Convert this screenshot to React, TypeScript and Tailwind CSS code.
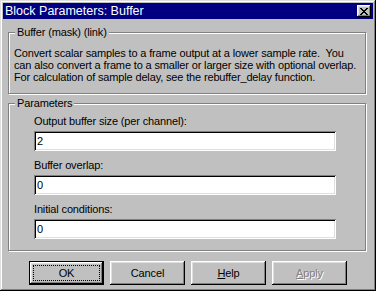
import React from "react";

const raised =
  "shadow-[inset_-1px_-1px_0_#000,inset_1px_1px_0_#fff,inset_-2px_-2px_0_#808080,inset_2px_2px_0_#dfdfdf]";
const sunken =
  "shadow-[inset_1px_1px_0_#808080,inset_-1px_-1px_0_#fff,inset_2px_2px_0_#000,inset_-2px_-2px_0_#dfdfdf]";
const etched = "border border-[#808080] shadow-[inset_1px_1px_0_#fff,1px_1px_0_#fff]";

function CloseGlyph() {
  // 8x7 pixel cross, drawn as little squares
  const pts: [number, number][] = [
    [0, 0], [1, 0], [6, 0], [7, 0],
    [1, 1], [2, 1], [5, 1], [6, 1],
    [2, 2], [3, 2], [4, 2], [5, 2],
    [3, 3], [4, 3],
    [2, 4], [3, 4], [4, 4], [5, 4],
    [1, 5], [2, 5], [5, 5], [6, 5],
    [0, 6], [1, 6], [6, 6], [7, 6],
  ];
  return (
    <svg width="8" height="7" viewBox="0 0 8 7" shapeRendering="crispEdges">
      {pts.map(([x, y]) => (
        <rect key={`${x}-${y}`} x={x} y={y} width="1" height="1" fill="#000" />
      ))}
    </svg>
  );
}

function GroupBox({
  title,
  className,
  children,
}: {
  title: string;
  className: string;
  children: React.ReactNode;
}) {
  return (
    <div className={`relative ${etched} ${className}`}>
      <span className="absolute left-[6px] top-[-8px] bg-[#c0c0c0] px-[2px] leading-[14px]">
        {title}
      </span>
      {children}
    </div>
  );
}

function Field({ label, value, first }: { label: string; value: string; first?: boolean }) {
  return (
    <div className={first ? "" : "mt-[7px]"}>
      <div className="leading-[14px]">{label}</div>
      <div className={`mt-[3px] h-[20px] w-[302px] bg-white ${sunken} flex items-center pl-[3px]`}>
        {value}
      </div>
    </div>
  );
}

function Button({
  children,
  isDefault,
  disabled,
}: {
  children: React.ReactNode;
  isDefault?: boolean;
  disabled?: boolean;
}) {
  if (isDefault) {
    return (
      <div className="w-[75px] h-[24px] border border-black">
        <div className={`w-full h-full ${raised} p-[3px]`}>
          <div className="w-full h-full border border-dotted border-black flex items-center justify-center">
            {children}
          </div>
        </div>
      </div>
    );
  }
  return (
    <div
      className={`w-[75px] h-[24px] ${raised} flex items-center justify-center ${
        disabled ? "text-[#808080] [text-shadow:1px_1px_0_#fff]" : ""
      }`}
    >
      {children}
    </div>
  );
}

export default function App() {
  return (
    <div
      className="w-[376px] h-[291px] bg-[#c0c0c0] text-black text-[11px] tracking-[-0.15px] p-[3px] flex flex-col shadow-[inset_-1px_-1px_0_#000,inset_1px_1px_0_#dfdfdf,inset_-2px_-2px_0_#808080,inset_2px_2px_0_#fff]"
      style={{ fontFamily: '"Liberation Sans", Arial, sans-serif' }}
    >
      {/* Title bar */}
      <div className="h-[16px] bg-[#000080] text-white flex items-center pl-[2px] pr-[2px]">
        <span className="text-[12.5px] tracking-normal leading-[16px] flex-1">Block Parameters: Buffer</span>
        <div className={`w-[14px] h-[12px] bg-[#c0c0c0] ${raised} flex items-center justify-center`}>
          <CloseGlyph />
        </div>
      </div>

      <div className="px-[5px] pt-[13px] flex flex-col">
        <GroupBox title="Buffer (mask) (link)" className="w-[358px] h-[62px]">
          <div className="pl-[5px] pt-[14px] leading-[12px] whitespace-nowrap">
            Convert scalar samples to a frame output at a lower sample rate.&nbsp; You
            <br />
            can also convert a frame to a smaller or larger size with optional overlap.
            <br />
            For calculation of sample delay, see the rebuffer_delay function.
          </div>
        </GroupBox>

        <GroupBox title="Parameters" className="mt-[9px] w-[358px] h-[148px]">
          <div className="pl-[25px] pt-[10px]">
            <Field first label="Output buffer size (per channel):" value="2" />
            <Field label="Buffer overlap:" value="0" />
            <Field label="Initial conditions:" value="0" />
          </div>
        </GroupBox>

        <div className="mt-[10px] pl-[21px] flex gap-[6px]">
          <Button isDefault>OK</Button>
          <Button>Cancel</Button>
          <Button>
            <span>
              <span className="underline">H</span>elp
            </span>
          </Button>
          <Button disabled>
            <span>
              <span className="underline">A</span>pply
            </span>
          </Button>
        </div>
      </div>
    </div>
  );
}
